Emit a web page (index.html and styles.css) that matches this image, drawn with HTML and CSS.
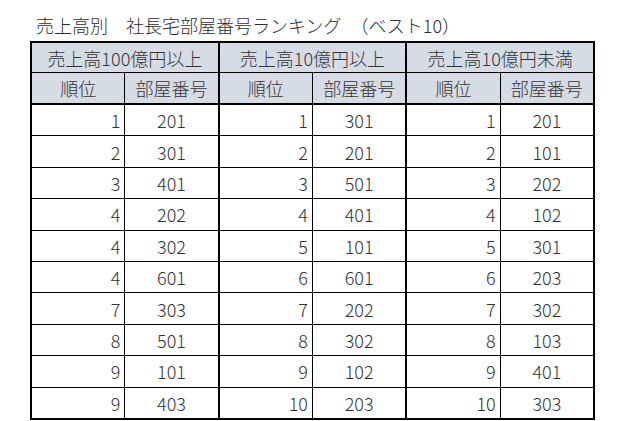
FILE: index.html
```html
<!DOCTYPE html>
<html lang="ja">
<head>
<meta charset="utf-8">
<title>ランキング</title>
<link rel="stylesheet" href="styles.css">
</head>
<body>
<div class="page">
  <div class="title">売上高別　社長宅部屋番号ランキング　（ベスト10）</div>
  <table class="rank">
    <colgroup>
      <col class="c"><col class="c g"><col class="c"><col class="c g"><col class="c"><col class="c">
    </colgroup>
    <thead>
      <tr class="h1">
        <th colspan="2" class="grp">売上高100億円以上</th>
        <th colspan="2" class="grp">売上高10億円以上</th>
        <th colspan="2">売上高10億円未満</th>
      </tr>
      <tr class="h2">
        <th>順位</th><th class="grp">部屋番号</th>
        <th>順位</th><th class="grp">部屋番号</th>
        <th>順位</th><th>部屋番号</th>
      </tr>
    </thead>
    <tbody>
      <tr><td class="n">1</td><td class="r grp">201</td><td class="n">1</td><td class="r grp">301</td><td class="n">1</td><td class="r">201</td></tr>
      <tr><td class="n">2</td><td class="r grp">301</td><td class="n">2</td><td class="r grp">201</td><td class="n">2</td><td class="r">101</td></tr>
      <tr><td class="n">3</td><td class="r grp">401</td><td class="n">3</td><td class="r grp">501</td><td class="n">3</td><td class="r">202</td></tr>
      <tr><td class="n">4</td><td class="r grp">202</td><td class="n">4</td><td class="r grp">401</td><td class="n">4</td><td class="r">102</td></tr>
      <tr><td class="n">4</td><td class="r grp">302</td><td class="n">5</td><td class="r grp">101</td><td class="n">5</td><td class="r">301</td></tr>
      <tr><td class="n">4</td><td class="r grp">601</td><td class="n">6</td><td class="r grp">601</td><td class="n">6</td><td class="r">203</td></tr>
      <tr><td class="n">7</td><td class="r grp">303</td><td class="n">7</td><td class="r grp">202</td><td class="n">7</td><td class="r">302</td></tr>
      <tr><td class="n">8</td><td class="r grp">501</td><td class="n">8</td><td class="r grp">302</td><td class="n">8</td><td class="r">103</td></tr>
      <tr><td class="n">9</td><td class="r grp">101</td><td class="n">9</td><td class="r grp">102</td><td class="n">9</td><td class="r">401</td></tr>
      <tr><td class="n">9</td><td class="r grp">403</td><td class="n">10</td><td class="r grp">203</td><td class="n">10</td><td class="r">303</td></tr>
    </tbody>
  </table>
</div>
</body>
</html>
```
FILE: styles.css
```css
html, body {
  margin: 0;
  padding: 0;
  background: #ffffff;
}
body {
  font-family: "Noto Sans CJK JP", "Noto Sans", sans-serif;
  color: #333333;
}
.page {
  padding-left: 30px;
}
.title {
  box-sizing: border-box;
  height: 41px;
  padding-top: 12px;
  padding-left: 6px;
  font-size: 18px;
  line-height: 26px;
  font-weight: 300;
  color: #2e2e2e;
  white-space: pre;
}
.rank {
  border-collapse: collapse;
  table-layout: fixed;
  width: 565px;
  border: 2px solid #000;
  font-size: 18px;
  font-weight: 300;
}
.rank th,
.rank td {
  border: 1px solid #000;
  padding: 0;
  overflow: hidden;
  white-space: nowrap;
  line-height: 24px;
}
.rank th {
  background: #d6dce4;
  font-weight: 300;
  text-align: center;
}
.rank .grp {
  border-right: 2px solid #000;
}
.h1 th {
  height: 29px;
}
.h2 th {
  height: 30px;
  border-bottom: 2px solid #000;
}
.rank td {
  height: 30.4px;
}
.rank td.n {
  text-align: right;
  padding-right: 4px;
}
.rank td.r {
  text-align: center;
}
```
